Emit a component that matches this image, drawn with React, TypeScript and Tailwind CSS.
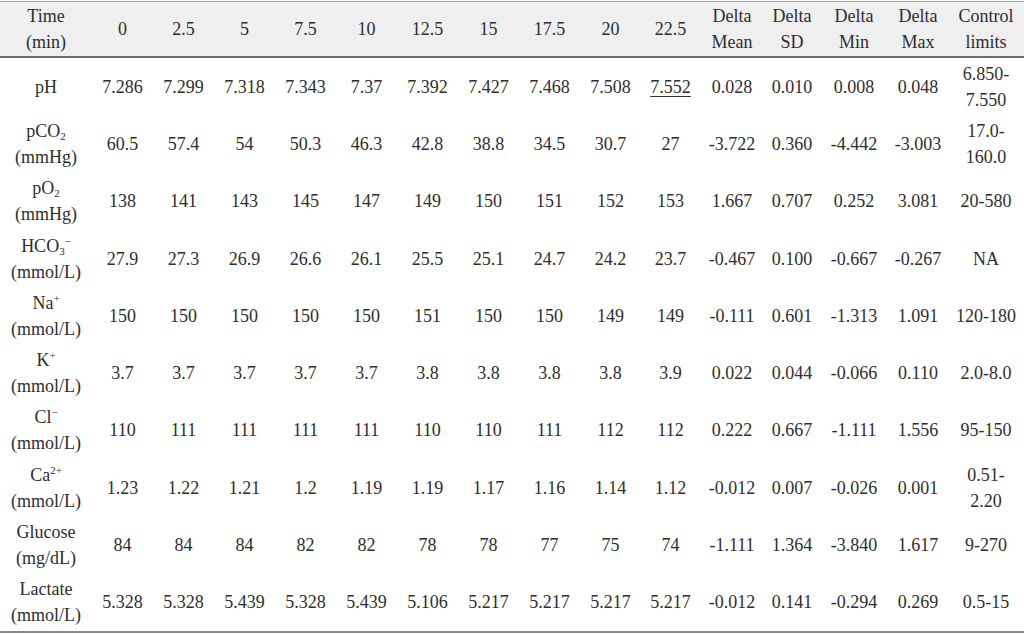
import React from 'react';

// column widths measured from the reference (sum = 1024)
const COLS =
  'grid grid-cols-[92px_61px_61px_61px_61px_61px_61px_61px_61px_61px_59px_64px_56px_68px_60px_76px]';

type Row = {
  label: React.ReactNode;
  values: string[];
  stats: string[];
  limits: React.ReactNode;
};

const Sup = ({ children }: { children: React.ReactNode }) => (
  <span className="relative -top-[7px] text-[11px] leading-none">{children}</span>
);

const Sub = ({ children }: { children: React.ReactNode }) => (
  <span className="relative top-[3px] text-[11px] leading-none">{children}</span>
);

const TwoLine = ({ a, b }: { a: React.ReactNode; b: React.ReactNode }) => (
  <div className="flex flex-col items-center leading-[26px]">
    <span>{a}</span>
    <span>{b}</span>
  </div>
);

const times = ['0', '2.5', '5', '7.5', '10', '12.5', '15', '17.5', '20', '22.5'];

const rows: Row[] = [
  {
    label: 'pH',
    values: ['7.286', '7.299', '7.318', '7.343', '7.37', '7.392', '7.427', '7.468', '7.508', '7.552'],
    stats: ['0.028', '0.010', '0.008', '0.048'],
    limits: <TwoLine a="6.850-" b="7.550" />,
  },
  {
    label: <TwoLine a={<>pCO<Sub>2</Sub></>} b="(mmHg)" />,
    values: ['60.5', '57.4', '54', '50.3', '46.3', '42.8', '38.8', '34.5', '30.7', '27'],
    stats: ['-3.722', '0.360', '-4.442', '-3.003'],
    limits: <TwoLine a="17.0-" b="160.0" />,
  },
  {
    label: <TwoLine a={<>pO<Sub>2</Sub></>} b="(mmHg)" />,
    values: ['138', '141', '143', '145', '147', '149', '150', '151', '152', '153'],
    stats: ['1.667', '0.707', '0.252', '3.081'],
    limits: '20-580',
  },
  {
    label: <TwoLine a={<>HCO<Sub>3</Sub><Sup>−</Sup></>} b="(mmol/L)" />,
    values: ['27.9', '27.3', '26.9', '26.6', '26.1', '25.5', '25.1', '24.7', '24.2', '23.7'],
    stats: ['-0.467', '0.100', '-0.667', '-0.267'],
    limits: 'NA',
  },
  {
    label: <TwoLine a={<>Na<Sup>+</Sup></>} b="(mmol/L)" />,
    values: ['150', '150', '150', '150', '150', '151', '150', '150', '149', '149'],
    stats: ['-0.111', '0.601', '-1.313', '1.091'],
    limits: '120-180',
  },
  {
    label: <TwoLine a={<>K<Sup>+</Sup></>} b="(mmol/L)" />,
    values: ['3.7', '3.7', '3.7', '3.7', '3.7', '3.8', '3.8', '3.8', '3.8', '3.9'],
    stats: ['0.022', '0.044', '-0.066', '0.110'],
    limits: '2.0-8.0',
  },
  {
    label: <TwoLine a={<>Cl<Sup>−</Sup></>} b="(mmol/L)" />,
    values: ['110', '111', '111', '111', '111', '110', '110', '111', '112', '112'],
    stats: ['0.222', '0.667', '-1.111', '1.556'],
    limits: '95-150',
  },
  {
    label: <TwoLine a={<>Ca<Sup>2+</Sup></>} b="(mmol/L)" />,
    values: ['1.23', '1.22', '1.21', '1.2', '1.19', '1.19', '1.17', '1.16', '1.14', '1.12'],
    stats: ['-0.012', '0.007', '-0.026', '0.001'],
    limits: <TwoLine a="0.51-" b="2.20" />,
  },
  {
    label: <TwoLine a="Glucose" b="(mg/dL)" />,
    values: ['84', '84', '84', '82', '82', '78', '78', '77', '75', '74'],
    stats: ['-1.111', '1.364', '-3.840', '1.617'],
    limits: '9-270',
  },
  {
    label: <TwoLine a="Lactate" b="(mmol/L)" />,
    values: ['5.328', '5.328', '5.439', '5.328', '5.439', '5.106', '5.217', '5.217', '5.217', '5.217'],
    stats: ['-0.012', '0.141', '-0.294', '0.269'],
    limits: '0.5-15',
  },
];

const Cell = ({ children }: { children: React.ReactNode }) => (
  <div className="flex items-center justify-center text-center whitespace-nowrap">{children}</div>
);

export default function App() {
  return (
    <div className="w-[1024px] h-[634px] bg-white text-[#2e2e2e] text-[18px] leading-[22px] overflow-hidden font-['Liberation_Serif','DejaVu_Serif',serif]">
      <div className="mt-px border-t border-[#a0a0a0]">
        {/* header */}
        <div className={`${COLS} h-[56px] bg-[#efefef] border-b-2 border-[#6e6e6e]`}>
          <Cell>
            <TwoLine a="Time" b="(min)" />
          </Cell>
          {times.map(t => (
            <Cell key={t}>{t}</Cell>
          ))}
          <Cell>
            <TwoLine a="Delta" b="Mean" />
          </Cell>
          <Cell>
            <TwoLine a="Delta" b="SD" />
          </Cell>
          <Cell>
            <TwoLine a="Delta" b="Min" />
          </Cell>
          <Cell>
            <TwoLine a="Delta" b="Max" />
          </Cell>
          <Cell>
            <TwoLine a="Control" b="limits" />
          </Cell>
        </div>

        {/* body */}
        <div className="border-b-2 border-[#8a8a8a]">
          {rows.map((r, i) => (
            <div key={i} className={`${COLS} h-[57.3px]`}>
              <Cell>{r.label}</Cell>
              {r.values.map((v, j) => (
                <Cell key={j}>
                  {i === 0 && j === 9 ? <span className="underline underline-offset-[3px]">{v}</span> : v}
                </Cell>
              ))}
              {r.stats.map((s, j) => (
                <Cell key={`s${j}`}>{s}</Cell>
              ))}
              <Cell>{r.limits}</Cell>
            </div>
          ))}
        </div>
      </div>
    </div>
  );
}
